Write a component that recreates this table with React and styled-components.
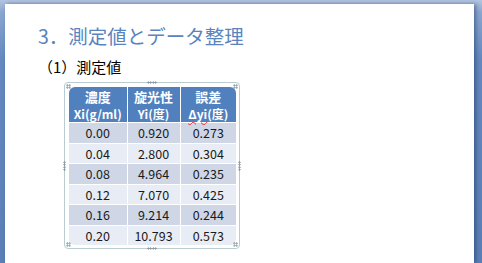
import React from 'react'
import styled, { createGlobalStyle } from 'styled-components'

const GlobalStyle = createGlobalStyle`
  html, body {
    margin: 0;
    padding: 0;
    width: 482px;
    height: 263px;
    overflow: hidden;
  }
  body {
    font-family: "Noto Sans CJK JP", "Noto Sans", sans-serif;
    background: linear-gradient(180deg, #b3c5e0 0px, #8aa6d0 12px, #6488bf 60px, #5a7fb7 100%);
  }
`

const rows = [
  ['0.00', '0.920', '0.273'],
  ['0.04', '2.800', '0.304'],
  ['0.08', '4.964', '0.235'],
  ['0.12', '7.070', '0.425'],
  ['0.16', '9.214', '0.244'],
  ['0.20', '10.793', '0.573'],
]

function App() {
  return (
    <>
      <GlobalStyle />
      <Stage>
        <Slide>
          <Title>3．測定値とデータ整理</Title>
          <Subtitle>（1）測定値</Subtitle>
          <Frame>
            <Handle $pos="tl" />
            <Handle $pos="tr" />
            <Handle $pos="bl" />
            <Handle $pos="br" />
            <EdgeDots $side="top" />
            <EdgeDots $side="bottom" />
            <EdgeDots $side="left" />
            <EdgeDots $side="right" />
            <TableClip>
              <Table>
                <colgroup>
                  <col style={{ width: 58 }} />
                  <col style={{ width: 53 }} />
                  <col style={{ width: 56 }} />
                </colgroup>
                <thead>
                  <tr>
                    <Th><Line>濃度</Line><Line $latin>Xi(g/ml)</Line></Th>
                    <Th><Line>旋光性</Line><Line $latin>Yi(度)</Line></Th>
                    <Th><Line>誤差</Line><Line $latin><Squiggle>Δyi</Squiggle>(度)</Line></Th>
                  </tr>
                </thead>
                <tbody>
                  {rows.map((r, i) => (
                    <tr key={i}>
                      {r.map((v, j) => (
                        <Td key={j} $dark={i % 2 === 0}>{v}</Td>
                      ))}
                    </tr>
                  ))}
                </tbody>
              </Table>
            </TableClip>
          </Frame>
        </Slide>
      </Stage>
    </>
  )
}

const Stage = styled.div`
  width: 482px;
  height: 263px;
  padding: 4px 8px 0 5px;
  box-sizing: border-box;
  display: flex;
`

const Slide = styled.div`
  flex: 1;
  background: #fff;
  box-shadow: 2px 0 4px rgba(20, 40, 80, 0.45);
  padding: 19px 0 0 33px;
  display: flex;
  flex-direction: column;
  align-items: flex-start;
`

const Title = styled.div`
  font-size: 19.5px;
  line-height: 26px;
  color: #5a84bd;
  letter-spacing: 0;
`

const Subtitle = styled.div`
  margin-top: 8px;
  margin-left: 0;
  font-size: 15px;
  line-height: 20px;
  color: #000;
`

const Frame = styled.div`
  position: relative;
  margin-top: 5px;
  margin-left: 26px;
  width: 176px;
  height: 167px;
  box-sizing: border-box;
  border: 1px solid #b9ccd2;
  border-radius: 4px;
  padding: 4px;
`

const cornerPos = {
  tl: 'top: 1px; left: 1px;',
  tr: 'top: 1px; right: 1px;',
  bl: 'bottom: 1px; left: 1px;',
  br: 'bottom: 1px; right: 1px;',
}

const Handle = styled.span`
  position: absolute;
  ${(p) => cornerPos[p.$pos]}
  width: 5px;
  height: 5px;
  background:
    radial-gradient(circle, #8c9aa3 0.8px, transparent 1.1px) 0 0 / 2.5px 2.5px;
`

const edgePos = {
  top: 'top: -2px; left: 50%; margin-left: -5px; width: 10px; height: 3px;',
  bottom: 'bottom: -2px; left: 50%; margin-left: -5px; width: 10px; height: 3px;',
  left: 'left: -2px; top: 50%; margin-top: -5px; width: 3px; height: 10px;',
  right: 'right: -2px; top: 50%; margin-top: -5px; width: 3px; height: 10px;',
}

const EdgeDots = styled.span`
  position: absolute;
  ${(p) => edgePos[p.$side]}
  background:
    radial-gradient(circle, #8c9aa3 0.8px, transparent 1.1px) 0 0 / 2.5px 2.5px;
`

const TableClip = styled.div`
  border-radius: 6px;
  overflow: hidden;
  width: 167px;
`

const Table = styled.table`
  width: 167px;
  border-collapse: collapse;
  table-layout: fixed;
  font-size: 12.5px;
`

const Th = styled.th`
  background: #5081be;
  color: #fff;
  font-weight: 700;
  height: 35px;
  padding: 0;
  text-align: center;
  vertical-align: middle;
  border-left: 1px solid #fff;
  white-space: nowrap;
  &:first-child {
    border-left: none;
  }
`

const Line = styled.div`
  font-size: ${(p) => (p.$latin ? '12px' : '13px')};
  line-height: 17px;
`

const Squiggle = styled.span`
  text-decoration: underline wavy #e03030;
  text-decoration-thickness: 1px;
  text-underline-offset: 2px;
`

const Td = styled.td`
  background: ${(p) => (p.$dark ? '#cfd7e7' : '#e8ecf4')};
  color: #1a1a1a;
  height: 19.5px;
  padding: 0;
  text-align: center;
  line-height: 19px;
  border-top: 1px solid #fff;
  border-left: 1px solid #fff;
  &:first-child {
    border-left: none;
  }
`

export default App
